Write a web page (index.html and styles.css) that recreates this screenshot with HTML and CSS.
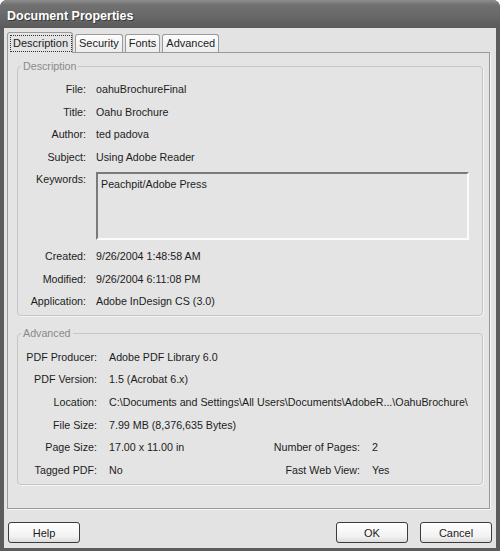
FILE: index.html
```
<!DOCTYPE html>
<html>
    <head>
        <title>Document Properties</title>
        <link rel="stylesheet" href="styles.css">
    </head>
    <body>
        <div class="window">
            <div class="titlebar">Document Properties</div>
            <div class="client">
                <div class="tabs">
                    <div class="tab active"><span class="focus">Description</span></div>
                    <div class="tab">Security</div>
                    <div class="tab">Fonts</div>
                    <div class="tab">Advanced</div>
                </div>

                <div class="panel">
                    <fieldset class="group">
                        <legend>Description</legend>
                        <div class="fields desc">
                            <span class="label">File:</span><span>oahuBrochureFinal</span>
                            <span class="label">Title:</span><span>Oahu Brochure</span>
                            <span class="label">Author:</span><span>ted padova</span>
                            <span class="label">Subject:</span><span>Using Adobe Reader</span>
                            <span class="label top">Keywords:</span>
                            <div class="keywords">Peachpit/Adobe Press</div>
                            <span class="label">Created:</span><span>9/26/2004 1:48:58 AM</span>
                            <span class="label">Modified:</span><span>9/26/2004 6:11:08 PM</span>
                            <span class="label">Application:</span><span>Adobe InDesign CS (3.0)</span>
                        </div>
                    </fieldset>

                    <fieldset class="group advanced">
                        <legend>Advanced</legend>
                        <div class="fields adv">
                            <span class="label">PDF Producer:</span><span class="wide">Adobe PDF Library 6.0</span>
                            <span class="label">PDF Version:</span><span class="wide">1.5 (Acrobat 6.x)</span>
                            <span class="label">Location:</span><span class="wide">C:\Documents and Settings\All Users\Documents\AdobeR...\OahuBrochure\</span>
                            <span class="label">File Size:</span><span class="wide">7.99 MB (8,376,635 Bytes)</span>
                            <span class="label">Page Size:</span><span>17.00 x 11.00 in</span>
                            <span class="label">Number of Pages:</span><span>2</span>
                            <span class="label">Tagged PDF:</span><span>No</span>
                            <span class="label">Fast Web View:</span><span>Yes</span>
                        </div>
                    </fieldset>
                </div>

                <div class="buttons">
                    <button type="button">Help</button>
                    <span class="spacer"></span>
                    <button type="button">OK</button>
                    <button type="button">Cancel</button>
                </div>
            </div>
        </div>
    </body>
</html>
```
FILE: styles.css
```
body {
    margin: 0;
    background: #fff;
    font-family: "Liberation Sans", Arial, sans-serif;
    font-size: 10.7px;
    color: #1c1c1c;
}
.window {
    width: 500px;
    height: 551px;
    box-sizing: border-box;
    display: flex;
    flex-direction: column;
    background: #5c5c5c;
    border-radius: 7px 7px 0 0;
    padding: 0 4px 3px 4px;
}
.titlebar {
    height: 28px;
    flex: none;
    box-sizing: border-box;
    margin: 0 -4px;
    padding: 3px 0 0 7px;
    display: flex;
    align-items: center;
    background: linear-gradient(#8e8e8e, #707070 18%, #676767 60%, #5a5a5a);
    border-radius: 7px 7px 0 0;
    color: #fff;
    font-weight: bold;
    font-size: 12.5px;
    text-shadow: 1px 1px 0 #3a3a3a;
}
.client {
    flex: 1;
    background: #e3e3e3;
    padding: 4px 6px 0 3px;
    display: flex;
    flex-direction: column;
}

/* tabs */
.tabs {
    display: flex;
    align-items: flex-end;
    height: 20px;
    position: relative;
    z-index: 1;
}
.tab {
    height: 18px;
    box-sizing: border-box;
    border: 1px solid #9a9a9a;
    border-bottom: none;
    border-radius: 3px 3px 0 0;
    padding: 0 3px;
    margin-left: 2px;
    line-height: 17px;
    font-size: 11px;
    background: linear-gradient(#fdfdfd, #ececec);
}
.tab.active {
    height: 21px;
    margin: 0 0 -1px 0;
    padding: 2px 0 0 2px;
    background: #e4e4e4;
}
.focus {
    display: inline-block;
    border: 1px dotted #333;
    padding: 0 3px 0 2px;
    line-height: 15px;
}

.panel {
    height: 457px;
    box-sizing: border-box;
    border: 1px solid #9a9a9a;
    box-shadow: 1px 1px 0 #f6f6f6;
    background: #e4e4e4;
    padding: 7px 6px 0 9px;
}

/* group boxes */
.group {
    margin: 0;
    padding: 0 0 2px 0;
    min-inline-size: 0;
    border: 1px solid #c6c6c6;
    border-radius: 4px;
    box-shadow: 1px 1px 0 #f4f4f4;
}
.group legend {
    margin-left: 3px;
    padding: 0 2px;
    line-height: 13px;
    color: #8a8a8a;
}
.group.advanced {
    margin-top: 11px;
    padding-bottom: 3px;
}
.fields {
    display: grid;
    align-items: center;
    white-space: nowrap;
}
.fields.desc {
    padding-top: 5px;
    grid-template-columns: 68px 1fr;
    grid-template-rows: repeat(4, 22.6px) 76.4px repeat(3, 22.6px);
    column-gap: 10px;
}
.fields.adv {
    padding-top: 6px;
    grid-template-columns: 79px 149px 90px 1fr;
    grid-auto-rows: 22.6px;
    column-gap: 12px;
}
.label {
    text-align: right;
}
.label.top {
    align-self: start;
    line-height: 22.6px;
}
.wide {
    grid-column: 2 / 5;
}
.keywords {
    align-self: start;
    margin: 4px 13px 0 0;
    height: 68px;
    box-sizing: border-box;
    border: 2px solid;
    border-color: #7a7a7a #fbfbfb #fbfbfb #7a7a7a;
    padding: 4px 3px;
}

/* dialog buttons */
.buttons {
    display: flex;
    gap: 12px;
    margin: 13px -2px 0 1px;
}
.spacer {
    flex: 1;
}
button {
    width: 72px;
    height: 21px;
    border: 1px solid #3c3c3c;
    border-radius: 3px;
    background: linear-gradient(#ffffff, #f2f2f2 70%, #dcdcdc);
    font-family: "Liberation Sans", Arial, sans-serif;
    font-size: 11px;
    color: #1c1c1c;
    padding: 0;
}
```
